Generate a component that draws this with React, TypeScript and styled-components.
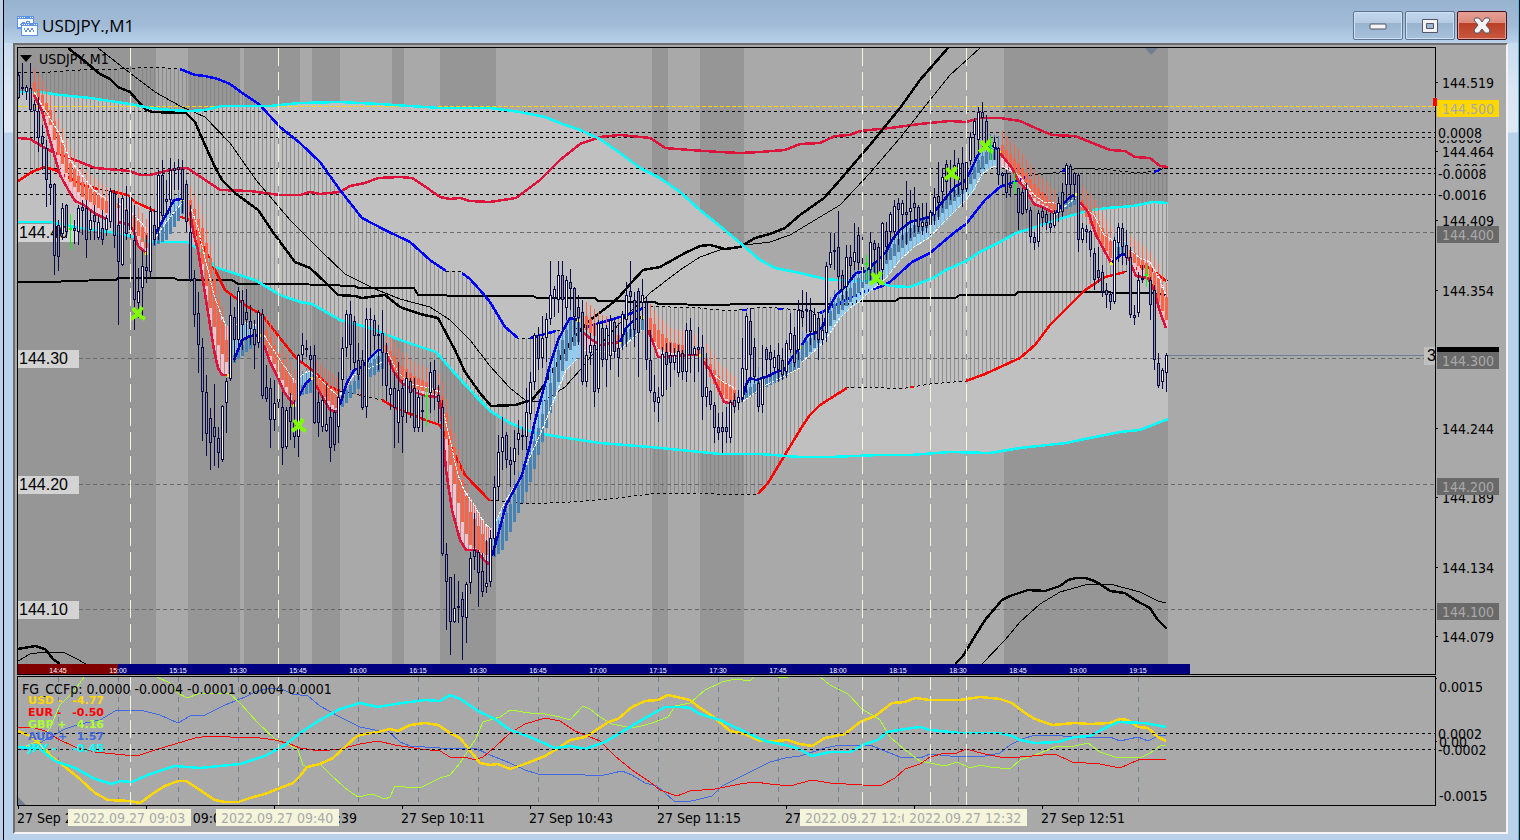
import React from "react";
import styled, { createGlobalStyle } from "styled-components";

const GlobalStyle = createGlobalStyle`
  *, *::before, *::after { box-sizing: border-box; }
  html, body { margin: 0; }
  body { background: #b9d1ea; font-family: "Open Sans", "Noto Sans", sans-serif; }
`;

const UI_FONT = '"DejaVu Sans Condensed", "Noto Sans", sans-serif';
const LABEL_FONT = '"Liberation Sans", Arial, sans-serif';

/* ---------- window chrome ---------- */

const WindowFrame = styled.main`
  display: flex;
  flex-direction: column;
  min-height: 100vh;
  padding: 0 11px 6px 9px;
  background: linear-gradient(#b9d1ea, #d8e5f3 85px, #dfe9f5 132px, #b9d1ea 133px);
  border-left: 1px solid #000;
  border-right: 1px solid #000;
  box-shadow: inset -1px 0 0 #32c8ee;
  margin-left: 3px;
`;

const TitleBar = styled.header`
  display: flex;
  align-items: center;
  gap: 4px;
  height: 43px;
  margin: 0 -10px 0 -9px;
  padding: 8px 11px 0 12px;
  background: linear-gradient(#98b3d0, #a2bcd8 60%, #b9d1ea);
`;

const Title = styled.h1`
  flex: 1;
  margin: 0;
  padding-top: 1px;
  font-size: 17px;
  line-height: 24px;
  font-weight: 400;
  color: #000;
`;

const Controls = styled.div`
  display: flex;
  gap: 2px;
`;

const ControlButton = styled.button<{ $danger?: boolean }>`
  display: grid;
  place-items: center;
  width: 50px;
  height: 29px;
  padding: 0;
  border: 1px solid ${(p) => (p.$danger ? "#43141c" : "#5d7591")};
  border-radius: 2px;
  background: ${(p) =>
    p.$danger
      ? "linear-gradient(#e6a093, #db8a7c 40%, #b93f26 41%, #c9583f)"
      : "linear-gradient(#c3d7ec, #b5cbe3 40%, #98b3cf 41%, #a8c1dc)"};
  box-shadow: inset 0 0 0 1px ${(p) => (p.$danger ? "#e3a096" : "#d2e1f1")};
`;

const Client = styled.section`
  flex: 1;
  display: grid;
  grid-template-columns: minmax(0, 1fr) 70px;
  grid-template-rows: minmax(628px, 1fr) 130px 26px;
  padding: 2px 0 0 2px;
  background: #a9a9a9;
  border: 2px solid #6d6d6d;
  border-right-color: #f4f4f4;
  border-bottom-color: #f4f4f4;
`;

const Panel = styled.div<{ $last?: boolean }>`
  min-width: 0;
  border: 1px solid #000;
  margin-bottom: ${(p) => (p.$last ? 0 : "1px")};
  overflow: hidden;
`;

const Scale = styled.div`
  min-width: 0;
`;

const TimeScale = styled.div`
  grid-column: 1 / -1;
  overflow: hidden;
`;

const Canvas = styled.svg<{ $open?: boolean }>`
  display: block;
  width: 100%;
  height: 100%;
  overflow: ${(p) => (p.$open ? "visible" : "hidden")};
  font-family: ${UI_FONT};
  font-size: 14px;
`;

const LevelText = styled.text`
  font-family: ${LABEL_FONT};
  font-size: 16px;
`;

const RulerText = styled.text`
  font-family: ${LABEL_FONT};
  font-size: 7px;
  fill: #fff;
  text-anchor: middle;
`;

const LegendText = styled.text`
  font-family: "DejaVu Sans", sans-serif;
  font-size: 11px;
  font-weight: 700;
`;

/* ---------- helpers ---------- */

type Pt = [number, number];

// Horizontal rules run past any window width; the panel clips them.
const FAR = 4000;

const parse = (s: string): Pt[] =>
  s
    .trim()
    .split(/\s+/)
    .map((p) => p.split(":").map(Number) as Pt);

const at = (pts: Pt[], x: number): number => {
  if (x <= pts[0][0]) return pts[0][1];
  for (let i = 1; i < pts.length; i++) {
    const [x1, y1] = pts[i];
    const [x0, y0] = pts[i - 1];
    if (x <= x1) return y0 + ((y1 - y0) * (x - x0)) / (x1 - x0);
  }
  return pts[pts.length - 1][1];
};

const join = (pts: Pt[]) => pts.map(([x, y]) => `${x},${y}`).join(" ");

interface CurveProps {
  d: string;
  c: string;
  w?: number;
  dash?: string;
}

const Curve = ({ d, c, w = 2.5, dash }: CurveProps) => (
  <polyline
    points={join(parse(d))}
    fill="none"
    stroke={c}
    strokeWidth={w}
    strokeDasharray={dash}
    strokeLinejoin="round"
    shapeRendering="crispEdges"
  />
);

/* ---------- price data ---------- */

const BANDS = [
  [18, 156], [188, 240], [244, 300], [312, 340], [392, 404],
  [440, 496], [652, 668], [700, 744], [1004, 1168],
];

const CLOUD_TOP =
  "18:92 40:92 60:95 90:98 130:104 150:108 170:110 190:111 205:110 222:106 270:106 300:103 340:102 380:104 440:108 490:108 520:112 545:117 560:123 580:130 600:139 620:153 640:168 660:178 680:192 700:210 720:226 745:247 760:260 775:268 800:273 825:279 850:281 875:281 890:286 910:287 920:283 933:278 946:270 966:261 980:252 1000:242 1016:233 1033:228 1046:223 1066:217 1087:211 1107:208 1133:206 1153:202 1168:203";
const CLOUD_BOTTOM =
  "18:222 50:222 80:228 110:232 130:236 150:242 187:242 200:250 215:267 230:272 255:280 280:295 300:302 312:304 340:320 370:328 400:340 436:352 450:368 470:390 490:411 510:423 532:432 560:437 600:443 650:447 720:454 760:454 800:457 830:457 880:455 910:455 950:452 990:453 1020:448 1066:443 1090:438 1120:432 1140:430 1168:419";

const BLUE_A =
  "180:69 195:75 205:76 218:79 230:84 245:95 260:105 280:127 300:143 320:162 340:190 362:218 385:230 410:242 430:260 446:271";
const BLUE_B = "462:273 470:279 480:290 490:302 505:327 518:338";
const BLUE_C = "530:338 545:334 556:331";
const BLUE_D = "586:327 610:320 630:314 643:308";
const BLUE_E =
  "820:313 836:305 850:298 866:291 880:287 890:282 912:262 930:253 955:232 966:224 985:200 1000:187 1014:182 1026:177";
const TOP_BAND =
  "18:72 50:72 80:70 120:69 150:67 180:69 195:75 218:79 230:84 245:95 260:105 280:127 300:143 320:162 340:190 362:218 385:230 410:242 430:260 446:271 462:272 470:279 480:290 490:302 505:327 518:338 530:338 556:331 586:327 610:320 643:308 650:306 670:307 700:308 730:311 765:307 800:310 820:313 836:305 850:298 866:291 880:287 890:282 912:262 930:253 955:232 966:224 985:200 1000:187 1014:182 1026:176 1060:172 1080:168 1110:170 1140:173 1168:168";

const RED_A = "18:181 32:172 44:167 55:170 80:184 98:189";
const RED_B = "110:191 128:195 135:202 155:211";
const RED_C =
  "178:216 190:220 205:250 225:290 245:305 262:315 280:338 296:358 312:370 330:387 340:391";
const RED_D = "382:400 396:408 425:420 440:425 450:445 465:475 490:501";
const RED_E = "758:494 768:483 780:463 800:430 810:415 820:405 847:388";
const RED_F =
  "966:381 985:374 1020:358 1035:345 1050:325 1068:307 1085:290 1105:277 1125:272";
const RED_G = "1133:270 1142:266 1150:268 1166:281";
const BOTTOM_BAND =
  "18:181 32:172 44:167 55:170 80:184 98:189 128:195 135:202 155:211 178:216 190:220 205:250 225:290 245:305 262:315 280:338 296:358 312:370 330:387 340:391 382:400 396:408 425:420 440:425 450:445 465:475 490:500 500:501 530:504 570:502 610:499 650:494 700:493 730:495 758:494 768:483 780:463 800:430 810:415 820:405 847:388 870:387 900:389 930:384 966:381 985:374 1020:358 1035:345 1050:325 1068:307 1085:290 1105:277 1133:270 1142:266 1150:268 1168:281";

const CRIMSON =
  "18:138 30:139 45:148 55:153 70:158 95:168 130:171 140:175 150:175 170:170 187:168 220:190 250:191 280:195 300:195 310:192 320:194 340:192 350:186 365:183 378:178 400:177 412:178 430:190 440:197 450:199 460:198 470:201 490:202 516:198 540:180 560:160 580:144 600:137 620:135 650:138 665:148 690:150 720:152 740:153 760:152 785:150 800:144 820:143 835:136 850:135 860:131 890:128 920:124 950:121 966:122 980:118 1000:118 1020:121 1040:130 1052:135 1075:136 1090:142 1110:150 1125:151 1135:157 1150:158 1160:166 1168:167";

const BLACK_THICK =
  "68:48 82:59 100:74 110:79 118:87 130:92 145:109 152:112 186:113 195:122 205:145 215:167 222:180 235:193 258:210 275:235 295:262 310:268 325:282 338:295 355:296 362:298 385:295 400:307 420:314 438:318 455:350 465:372 480:393 491:406 515:405 532:400 545:384 560:358 575:336 590:320 610:305 620:296 632:282 643:270 660:267 685:253 700:246 710:245 725:249 740:247 755:238 770:234 785:228 800:215 824:198 840:180 870:145 900:108 920:80 948:48";
const BLACK_THIN =
  "98:48 130:73 155:92 180:106 205:117 230:143 256:180 290:220 320:250 345:274 375:289 400:299 430:307 450:320 470:340 490:366 510:388 525:400 533:402 545:400 565:387 580:370 600:345 630:312 650:293 680:270 700:257 720:250 745:245 770:242 790:235 815:220 840:205 870:173 900:138 930:100 950:75 980:48";
const LONG_MA =
  "18:282 60:282 62:281 116:280 118:278 174:278 178:280 232:280 238:284 294:284 355:286 358:288 414:288 418:295 475:296 533:296 537:298 595:298 598:301 655:302 658:304 716:305 745:304 800:304 853:304 857:301 895:301 900:298 955:298 960:295 1015:295 1018:292 1070:292 1152:293 1166:295";

interface Ribbon {
  up: boolean;
  from: number;
  to: number;
  fast: string;
  slow: string;
  top: string;
  bottom: string;
}

const ribbons: Ribbon[] = (
  [
    [0, 34, 106, "34:95 42:111 50:140 60:175 70:193 75:201 84:205 94:213 106:219", "34:92 50:118 60:135 70:160 80:173 94:190 106:199", "34:82 42:95 50:110 58:132 70:163 82:182 94:192 106:201", "34:95 42:106 50:125 58:155 70:182 82:197 94:205 106:213"],
    [0, 118, 146, "118:222 130:225 134:232 138:246 146:253", "118:203 134:215 146:228", "118:203 134:215 146:233", "118:208 134:230 146:248"],
    [1, 154, 182, "154:236 158:229 166:215 174:200 182:199", "154:240 166:222 182:203", "154:230 166:222 182:200", "154:246 166:240 182:214"],
    [0, 190, 226, "190:212 194:235 198:250 202:275 210:325 214:350 218:368 222:375 228:375", "190:205 198:228 206:262 214:295 222:317 226:326", "190:200 202:228 210:258 218:300 226:340", "190:225 202:264 210:308 218:345 226:362"],
    [1, 234, 260, "234:360 238:350 242:340 250:336 260:335", "234:326 242:322 260:326", "234:355 246:340 260:330", "234:363 246:352 260:342"],
    [0, 266, 294, "264:345 270:362 278:378 284:392 294:405", "264:335 280:360 294:380", "266:330 278:352 294:383", "266:348 278:372 294:402"],
    [1, 298, 312, "298:398 306:383 312:378", "298:378 308:371 314:374", "298:388 312:378", "298:396 312:392"],
    [0, 316, 338, "316:385 324:400 330:410 338:412", "316:375 326:385 338:396", "316:375 338:393", "316:390 338:410"],
    [1, 342, 382, "340:405 346:385 354:370 362:367 370:358 378:350 382:350", "340:395 354:375 370:368 382:362", "342:395 366:366 382:352", "342:407 366:380 382:369"],
    [0, 386, 438, "386:353 394:372 402:383 414:392 426:396 438:397", "386:350 398:372 410:384 430:388 440:392", "386:345 398:362 414:376 438:387", "386:358 398:378 414:389 438:395"],
    [0, 442, 490, "440:400 446:470 452:510 460:540 466:550 476:550 484:560 490:565", "442:405 450:440 458:475 464:490 474:505 484:523 490:528", "442:396 450:430 462:480 470:512 490:548", "442:412 450:465 462:522 470:545 490:558"],
    [1, 494, 578, "492:556 498:535 506:505 514:490 522:475 530:445 534:425 542:395 550:365 558:340 566:325 570:318 578:320", "494:525 506:500 520:478 540:435 556:395 566:370 578:358", "494:545 502:522 518:485 530:455 546:400 558:350 570:320 578:318", "494:557 502:550 518:513 530:482 546:428 558:382 570:350 578:342"],
    [0, 586, 618, "584:333 592:340 600:345 620:342", "584:350 620:353", "586:316 600:328 618:335", "586:330 600:341 618:341"],
    [1, 622, 642, "620:342 626:328 634:320 642:317", "620:350 635:336 642:330", "622:336 642:318", "622:347 642:330"],
    [0, 650, 700, "648:330 654:345 658:357 662:357 690:355 700:355", "648:332 660:352 700:356", "650:318 658:330 670:342 700:349", "650:335 658:349 670:353 700:354"],
    [0, 706, 734, "702:360 710:370 718:388 724:402 734:404", "706:368 720:380 736:389", "706:358 718:376 734:390", "706:369 718:392 734:405"],
    [1, 742, 798, "742:400 746:385 750:378 756:380 766:377 776:372 784:370 794:355 800:347", "742:402 766:385 786:375 800:368", "742:393 760:380 780:370 798:352", "742:402 760:390 780:380 798:368"],
    [1, 802, 998, "802:345 808:335 816:333 824:325 828:310 836:295 846:286 856:273 866:271 878:260 886:252 892:240 900:230 910:222 918:220 930:217 940:205 948:195 956:186 964:182 970:172 978:155 984:147 994:146 1000:152", "802:362 820:346 830:333 840:318 850:308 860:301 870:291 886:278 900:260 914:247 930:237 942:224 954:212 966:200 974:189 982:174 994:166 1000:167", "802:345 818:330 838:298 850:288 862:273 878:260 890:248 902:235 914:225 930:213 942:201 954:190 966:180 978:160 990:148 998:150", "802:361 818:343 838:314 850:302 862:288 878:273 890:260 902:248 914:237 930:225 942:213 954:201 966:190 978:173 990:160 998:160"],
    [0, 1002, 1054, "1000:153 1012:168 1018:180 1026:190 1034:204 1042:207 1054:213", "1002:166 1020:176 1034:195 1044:202 1054:203", "1002:145 1010:154 1022:168 1034:184 1054:204", "1002:158 1010:166 1022:180 1034:198 1054:212"],
    [1, 1058, 1076, "1056:213 1062:205 1070:197 1076:194", "1056:215 1070:202 1076:198", "1058:206 1076:193", "1058:213 1076:204"],
    [0, 1082, 1110, "1080:202 1088:212 1096:235 1104:250 1111:263", "1080:205 1094:215 1104:235 1114:241", "1082:200 1094:214 1110:241", "1082:210 1094:231 1110:258"],
    [1, 1114, 1126, "1112:262 1122:254 1126:255", "1114:241 1126:242", "1114:248 1126:246", "1114:256 1126:255"],
    [0, 1130, 1166, "1128:257 1136:276 1148:278 1154:290 1160:312 1166:328", "1130:250 1140:258 1150:262 1160:280 1166:295", "1130:250 1140:258 1150:267 1158:278 1166:297", "1130:260 1140:268 1150:280 1158:302 1166:320"],
  ] as [number, number, number, string, string, string, string][]
).map(([up, from, to, fast, slow, top, bottom]) => ({ up: !!up, from, to, fast, slow, top, bottom }));

// One candle per minute: high, body top, body bottom, low; "u" marks a rising candle, "g" a signal wick.
const CANDLES = `
72,75,98,99 63,87,89,95 85,87,92,100u 63,88,110,112 100,104,111,140 97,111,138,152 125,136,144,170 140,148,180,207 170,184,188,205 183,184,256,275
220,225,257,271 203,208,234,240u 204,205,232,238 214,228,230,250g 220,228,231,244 205,208,232,245u 200,207,211,235 200,208,240,258 210,220,230,240u 205,215,222,240
215,222,238,240u 210,228,240,245 215,218,230,236u 188,191,222,228u 190,193,236,248 198,225,262,325 195,198,265,266u 186,210,234,240 192,197,230,238u 205,240,300,330
268,291,303,318u 250,266,288,320u 235,267,271,283 206,211,272,278u 210,225,240,245 170,175,228,240u 160,175,216,222 180,199,202,215 158,170,200,213u 162,168,171,190
159,167,170,190 160,169,200,213 180,184,222,232 205,232,280,282 270,278,315,327 292,313,345,373 338,347,392,441 375,392,434,456 408,418,443,470 384,427,437,466
427,438,453,468 405,406,460,462u 378,381,403,433u 296,315,379,381u 307,317,340,362 287,291,340,345u 290,300,325,350 289,312,320,340 305,321,329,345 320,329,345,369
310,312,343,348u 309,314,396,399 365,387,399,402 378,388,420,448 380,403,420,431u 388,399,402,420 392,407,448,465 407,410,447,449u 393,407,422,440 400,422,437,448
354,355,437,457u 333,345,355,362u 340,348,350,357 346,355,360,377 345,355,423,424 392,402,423,437 395,400,427,432u 384,424,431,432u 407,417,448,462 410,412,445,451
372,397,427,443u 337,348,380,400u 310,314,348,357u 301,314,345,370 316,321,363,370 343,360,375,380 350,360,408,410 308,319,407,418u 308,319,320,357 315,320,336,350
325,334,336,370 310,333,353,386 343,353,386,401 360,388,395,410u 372,388,408,448 362,390,423,443u 380,388,417,453 372,378,413,423u 378,381,393,418 378,388,428,432
390,397,428,432u 395,410,412,432 388,395,397,426g 362,372,393,413u 360,370,390,410 385,395,402,423 400,407,554,556 543,554,582,630 577,577,622,655 574,608,622,623u
581,606,608,623 592,599,617,660 582,584,618,643u 552,558,583,594u 513,550,557,570 550,552,573,607 553,571,592,597 540,583,587,593u 530,538,582,587u 476,487,539,556u
435,452,487,500u 417,437,452,470u 432,435,460,468 447,460,465,487 430,448,462,475u 420,433,440,455u 427,435,437,450 388,412,437,450u 372,382,414,420u 333,335,382,390u
327,335,359,370 316,338,358,368u 313,319,338,362u 261,295,319,325u 286,289,298,317u 261,275,300,313u 261,275,300,330 276,280,308,320u 269,282,289,310 287,288,317,335
295,307,318,345 300,312,382,385 325,355,382,387u 333,345,353,365u 323,345,392,407 320,323,389,393u 320,328,360,367 325,328,360,387u 315,320,356,370u 317,322,352,358
323,348,358,377 311,314,335,350u 282,295,320,347u 261,291,297,337 292,300,330,347 288,291,333,377 279,295,303,320u 297,302,360,370 330,360,391,393 375,392,402,412
387,397,403,422u 347,354,396,397u 343,352,365,390 343,355,363,387 348,355,363,370u 345,351,373,377u 350,353,372,380 323,330,372,382u 318,330,355,373 346,348,355,382u
327,347,350,372 335,347,397,420 353,387,397,407u 390,391,405,410 402,405,428,443 413,427,433,440 412,427,432,453 407,427,432,443 400,402,438,443u 393,400,407,413
390,397,403,410u 338,368,398,402u 313,316,370,393u 308,321,355,383 338,347,377,383 378,383,407,412 345,378,405,413u 347,349,360,377 345,352,360,377 350,357,368,373u
343,355,370,382 348,360,375,380 340,343,372,378u 313,333,350,353u 327,335,363,367 300,310,350,360u 290,311,318,327 292,309,311,333 298,310,332,345 308,314,332,340u
313,318,340,360 315,330,340,345u 262,266,333,342u 233,252,265,268u 233,250,252,270 211,247,277,290 270,275,290,300 245,257,287,300u 245,257,266,280 223,252,262,270u
227,235,263,270 237,267,270,280 255,263,265,280g 232,242,270,280u 240,243,250,277 243,247,283,285 222,223,270,280u 222,231,247,260 212,214,232,245u 200,206,232,240u
198,203,210,245 200,203,215,240u 181,212,215,245 190,208,212,238u 187,203,208,233 205,207,227,232 203,222,227,235u 203,222,226,233 210,212,225,235u 188,197,215,225u
162,196,203,220 168,177,192,208u 160,164,182,200 160,170,176,200u 150,165,178,197 158,163,180,195u 147,163,190,207 148,162,189,195u 132,137,161,165u 118,121,135,158u
107,112,140,152u 102,112,118,150 115,121,145,148 136,145,147,160g 137,142,148,160u 147,148,175,185 172,173,176,187 170,173,193,198 175,185,188,197 173,182,184,194g
188,188,213,230 188,192,214,215 183,189,210,213u 207,210,237,243 232,237,243,250 210,213,242,247u 207,211,218,227 210,214,223,230 213,223,228,233 210,213,226,228u
197,203,213,222u 183,192,212,217 163,165,185,203u 164,166,185,200 172,173,185,200 173,175,240,252 223,228,240,243u 225,229,232,243 230,231,250,257 248,253,280,290
247,270,278,283 265,272,292,297 283,290,295,308 292,294,302,310 237,240,302,304u 223,227,243,262u 223,228,247,265 230,245,258,265 247,257,315,318 305,315,318,325
272,280,313,317u 265,278,280,283 265,274,276,287g 277,280,305,320 285,290,360,370 353,363,386,388 368,370,382,389u 353,355,373,392u
`
  .trim()
  .split(/\s+/)
  .map((c, i) => {
    const [high, top, bottom, low] = c.replace(/[ug]/, "").split(",").map(Number);
    return { x: 18 + i * 4, high, top, bottom, low, up: c.endsWith("u"), signal: c.endsWith("g") };
  });

const BUY_SELL = [
  [138, 314], [299, 426], [877, 279], [952, 174], [986, 147],
];

const LEVELS = [
  { price: "144.40", y: 232 },
  { price: "144.30", y: 358 },
  { price: "144.20", y: 484 },
  { price: "144.10", y: 609 },
];

const SESSION_LINES = [130, 278, 862, 930, 966];
const HOURS = [
  "14:45", "15:00", "15:15", "15:30", "15:45", "16:00", "16:15", "16:30", "16:45", "17:00",
  "17:15", "17:30", "17:45", "18:00", "18:15", "18:30", "18:45", "19:00", "19:15",
];

const SessionLines = ({ from, to, offset = 0 }: { from: number; to: number; offset?: number }) => (
  <g stroke="#f5f5dc" strokeDasharray="18 6" strokeDashoffset={offset} shapeRendering="crispEdges">
    {SESSION_LINES.map((x) => (
      <line key={x} x1={x + 0.5} x2={x + 0.5} y1={from} y2={to} />
    ))}
  </g>
);

const RibbonShape = ({ r }: { r: Ribbon }) => {
  const fast = parse(r.fast);
  const slow = parse(r.slow);
  const top = parse(r.top);
  const bottom = parse(r.bottom);
  const xs: number[] = [];
  for (let x = r.from; x <= r.to; x += 4) xs.push(x);
  const fill = r.up ? "#87cefa" : "#ffc0cb";
  const body = r.up ? "#4682b4" : "#ff6347";
  const [endX, endY] = fast[fast.length - 1];
  return (
    <g shapeRendering="crispEdges">
      {xs.map((x) => {
        const a = at(fast, x);
        const b = at(slow, x);
        return <rect key={x} x={x - 1} width="3" y={Math.round(Math.min(a, b))} height={Math.round(Math.abs(a - b))} fill={fill} />;
      })}
      {xs.map((x) => {
        const t = Math.round(at(top, x));
        const b = Math.round(at(bottom, x));
        return (
          <g key={x} fill={body}>
            <rect x={x - 1} width="3" y={t} height={b - t} />
            <rect x={x} width="1" y={t - 14} height="14" />
          </g>
        );
      })}
      <polyline points={join(slow)} fill="none" stroke="#fff" strokeDasharray="3 1" />
      <polyline points={join(fast)} fill="none" stroke={r.up ? "#0000cd" : "#dc143c"} strokeWidth="2.5" />
      {endX < 1166 && <rect x={endX - 1} y={endY - 1} width="3" height="3" fill="#ff0" />}
    </g>
  );
};

const PriceChart = () => {
  const top = parse(CLOUD_TOP);
  const bottom = parse(CLOUD_BOTTOM);
  const bandTop = parse(TOP_BAND);
  const bandBottom = parse(BOTTOM_BAND);
  return (
    <Canvas role="img" aria-label="USDJPY one minute price chart">
      <g transform="translate(-18 -48)">
        {BANDS.map(([a, b]) => (
          <rect key={a} x={a} y="48" width={b - a} height="616" fill="#969696" />
        ))}
        <polygon points={join([...top, ...[...bottom].reverse()])} fill="#c0c0c0" shapeRendering="crispEdges" />
        <g fill="#828282" fillOpacity="0.8" shapeRendering="crispEdges">
          {CANDLES.filter((c) => c.x >= 30).map((c) => {
            const a = Math.round(at(bandTop, c.x));
            const b = Math.round(at(bandBottom, c.x));
            return <rect key={c.x} x={c.x} width="1" y={Math.min(a, b)} height={Math.abs(b - a)} />;
          })}
        </g>
        {LEVELS.map((l) => (
          <g key={l.price}>
            <rect x="18" y={l.y - 8} width="61" height="18" fill="#d3d3d3" />
            <line x1="79" x2={FAR} y1={l.y + 0.5} y2={l.y + 0.5} stroke="#696969" strokeDasharray="4 3" shapeRendering="crispEdges" />
            <LevelText x="19" y={l.y + 6}>{l.price}</LevelText>
          </g>
        ))}
        <g shapeRendering="crispEdges">
          <line x1="18" x2={FAR} y1="106.5" y2="106.5" stroke="#ffd700" strokeDasharray="4 2" />
          {[111, 132, 137, 168, 173, 194].map((y) => (
            <line key={y} x1="18" x2={FAR} y1={y + 0.5} y2={y + 0.5} stroke="#000" strokeDasharray="3 3" />
          ))}
          <line x1="1168" x2={FAR} y1="355.5" y2="355.5" stroke="#708090" />
        </g>

        <Curve d={TOP_BAND} c="#000" w={1} dash="3 3" />
        <Curve d={BOTTOM_BAND} c="#000" w={1} dash="3 3" />
        <Curve d={CRIMSON} c="#dc143c" />
        <Curve d={LONG_MA} c="#000" w={2} />
        <Curve d={BLACK_THICK} c="#000" />
        <Curve d={BLACK_THIN} c="#000" w={1} />
        <Curve d="955:664 963:656 975:636 985:620 1002:600 1010:596 1028:590 1045:591 1060:586 1068:580 1076:578 1085:578 1092:580 1100:584 1110:591 1125:593 1135:600 1150:608 1158:620 1167:629" c="#000" />
        <Curve d="982:664 1005:640 1020:622 1040:604 1060:592 1085:585 1110:584 1140:592 1158:601 1166:603" c="#000" w={1} />
        <Curve d="18:649 35:646 45:649 53:659 60:664" c="#000" />
        <Curve d="18:661 30:654 45:652 65:653 75:658 86:664" c="#000" w={1} />
        {[BLUE_A, BLUE_B, BLUE_C, BLUE_D, BLUE_E, "742:310 747:310", "778:309 783:309", "1062:171 1066:170", "1154:172 1160:170"].map((d) => (
          <Curve key={d} d={d} c="#00f" />
        ))}
        {[RED_A, RED_B, RED_C, RED_D, RED_E, RED_F, RED_G, "360:395 363:396", "910:387 914:387"].map((d) => (
          <Curve key={d} d={d} c="#f00" />
        ))}
        <Curve d={CLOUD_TOP} c="#0ff" />
        <Curve d={CLOUD_BOTTOM} c="#0ff" />

        {ribbons.map((r) => (
          <RibbonShape key={r.from} r={r} />
        ))}

        <g shapeRendering="crispEdges">
          {CANDLES.map((c) =>
            c.signal ? null : (
              <g key={c.x}>
                <rect x={c.x} y={c.high} width="1" height={c.low - c.high} fill="#0a0a46" />
                <rect x={c.x - 1} y={c.top} width="3" height={c.bottom - c.top} fill="#0a0a46" />
                <rect x={c.x} y={c.top + 1} width="1" height={Math.max(0, c.bottom - c.top - 2)} fill={c.up ? "#fff" : "#969696"} />
              </g>
            ),
          )}
        </g>
        <g stroke="#7fff00" strokeWidth="4" fill="none">
          {BUY_SELL.map(([x, y]) => (
            <path key={x} d={`M${x - 7} ${y + 5}Q${x} ${y + 1} ${x + 4} ${y - 7}M${x - 5} ${y - 6}Q${x} ${y + 2} ${x + 7} ${y + 5}`} />
          ))}
        </g>
        <g fill="#0f0" shapeRendering="crispEdges">
          {CANDLES.filter((c) => c.signal).map((c) => (
            <g key={c.x}>
              <rect x={c.x} y={c.high} width="1" height={c.low - c.high} />
              <rect x={c.x - 1} y={c.top} width="3" height="2" />
            </g>
          ))}
          <rect x="426" y="388" width="1" height="38" />
        </g>
        <SessionLines from={48} to={664} />

        <g shapeRendering="crispEdges">
          <rect x="18" y="664" width="100" height="10" fill="#800000" />
          <rect x="118" y="664" width="1072" height="10" fill="#000080" />
        </g>
        {HOURS.map((h, i) => (
          <RulerText key={h} x={58 + i * 60} y="673">{h}</RulerText>
        ))}
        <path d="M20 55h12l-6 7z" fill="#000" />
        <path d="M1145 48h13l-7 7z" fill="#708090" />
        <text x="39" y="64">USDJPY.,M1</text>
      </g>
    </Canvas>
  );
};

const STRENGTH = [
  { c: "#4169e1", w: 1, d: "18:750 30:749 45:740 65:729 80:724 100:720 115:711 140:710 160:715 178:723 190:716 205:715 225:705 245:697 255:692 270:688 280:688 292:694 308:696 320:706 340:717 360:727 375:730 387:730 400:742 410:746 440:748 475:748 490:755 510:763 525:770 538:774 570:774 600:776 622:771 632:775 645:783 657:786 665:793 674:801 687:802 700:799 712:796 722:786 740:777 770:762 785:758 800:756 825:748 840:745 870:745 885:751 900:757 920:758 930:754 960:757 985:756 1000:753 1010:745 1022:739 1035:735 1055:735 1080:738 1110:737 1120:741 1138:737 1148:741 1160:735 1166:735" },
  { c: "#adff2f", w: 1, d: "22:748 40:740 50:728 60:705 75:690 84:677" },
  { c: "#adff2f", w: 1, d: "157:677 170:683 178:693 187:698 198:694 215:693 230:694 240:703 258:723 275:739 290:745 298:750 303:765 308:768 320:764 330:774 345:788 358:797 372:794 385:799 390:797 395:786 405:787 422:787 440:778 450:775 460:763 475:740 483:722 500:717 510:710 530:713 545:714 560:717 570:720 583:706 590:709 600:717 612:724 632:728 645:725 655:722 668:717 675:706 690:703 705:690 722:682 735:679 750:681 755:676" },
  { c: "#adff2f", w: 1, d: "778:677 783:678 788:677" },
  { c: "#adff2f", w: 1, d: "820:677 830:685 848:694 862:709 880:720 890:737 905:750 920:761 930:763 945:766 957:762 970:768 980:765 990:767 1010:769 1020:760 1035:755 1055:747 1075:746 1088:743 1100:752 1115:757 1140:758 1150:753 1160:746 1166:745" },
  { c: "#f00", w: 1, d: "18:727 35:728 45:731 58:739 75:747 95:752 125:755 140:755 155:750 175:744 195:738 210:736 230:737 260:738 275:740 290:744 300:748 320:751 340:749 360:744 378:741 395:745 420:749 440:751 450:757 465:757 475:760 483:757 495:747 510:733 525:724 545:718 560:721 575:731 600:741 615:756 632:770 650:782 660:790 677:796 690:791 715:789 740:784 755:782 770:784 790:786 812:780 830:783 862:785 882:785 895:778 905:769 920:764 930:757 945:753 957:753 966:749 985:754 1000:757 1020:757 1055:754 1072:762 1100:764 1120:768 1138:760 1166:759" },
  { c: "#ffd700", w: 2.5, d: "18:731 30:736 40:744 52:757 65:767 80:779 95:793 108:800 130:801 140:803 155:792 165:786 178:781 186:781 200:790 215:800 225:802 238:802 250:798 265:794 280:788 293:783 300:776 307:767 320:764 333:758 345:747 357:736 365:734 378:732 390:729 398:731 410:725 425:723 438:725 450:733 460:738 468:748 480:763 490:765 498:764 510:769 525:764 545:756 560:747 570:740 585:737 595:731 608:722 618:719 632:707 645:701 658:700 668:695 690:700 700:708 715:718 730:731 745:734 760:741 775:741 787:740 800:744 812:746 825:738 845:734 860:722 875:716 892:703 905:702 915:698 930:700 960:700 980:697 1000:699 1012:703 1025:713 1035:719 1052:725 1075:723 1090:724 1110:723 1120:719 1128:720 1138:727 1148:728 1158:737 1166:741" },
  { c: "#0ff", w: 2.5, d: "18:747 40:749 55:761 75:768 95:779 112:784 120:781 132:782 150:774 175:766 200:768 240:764 265:756 285:745 300:733 320:720 340:709 360:703 378:707 395:704 425:700 440:701 450:695 460:699 480:712 495:719 510:730 530:737 555:748 570:746 585:749 605:742 620:733 640:721 665:707 680:707 690:708 700:714 720:720 745:732 765:741 785:745 797:748 812:756 830:752 850:752 865:744 878:740 887:732 905:729 920:727 930:730 960:733 985:733 1000:733 1012:736 1020:740 1035:743 1058:742 1075:737 1090:736 1105:728 1118:722 1145:723 1166:727" },
];

const LEGEND = [
  { name: "USD -", value: "-4.77", c: "#ffd700" },
  { name: "EUR -", value: "-0.50", c: "#f00" },
  { name: "GBP +", value: "4.16", c: "#adff2f" },
  { name: "AUD +", value: "1.57", c: "#4169e1" },
  { name: "JPY -", value: "-0.45", c: "#0ff" },
];

const StrengthChart = () => (
  <Canvas role="img" aria-label="Currency strength indicator">
    <g transform="translate(-18 -677)">
      <g stroke="#708090" strokeDasharray="5 5" shapeRendering="crispEdges">
        {HOURS.map((h, i) => (
          <line key={h} x1={58.5 + i * 60} x2={58.5 + i * 60} y1="677" y2="805" />
        ))}
      </g>
      {STRENGTH.map((s) => (
        <Curve key={s.d} d={s.d} c={s.c} w={s.w} />
      ))}
      <g stroke="#000" strokeDasharray="3 3" shapeRendering="crispEdges">
        <line x1="18" x2={FAR} y1="733.5" y2="733.5" />
        <line x1="18" x2={FAR} y1="749.5" y2="749.5" />
      </g>
      <SessionLines from={677} to={805} offset={5} />
      <path d="M18 797l8 8h-8z" fill="#708090" />
      <text x="22" y="694">FG_CCFp: 0.0000 -0.0004 -0.0001 0.0004 0.0001</text>
      {LEGEND.map((l, i) => (
        <g key={l.name} fill={l.c}>
          <LegendText x="28" y={704 + i * 12}>{l.name}</LegendText>
          <LegendText x="104" y={704 + i * 12} textAnchor="end">{l.value}</LegendText>
        </g>
      ))}
    </g>
  </Canvas>
);

const TICKS: [string, number][] = [
  ["144.519", 88], ["144.464", 157], ["144.409", 226], ["144.354", 296],
  ["144.244", 434], ["144.189", 503], ["144.134", 573], ["144.079", 642],
];

const TAGS = [
  { t: "144.500", y: 114, c: "#ffd700" },
  { t: "144.400", y: 240, c: "#696969" },
  { t: "144.300", y: 366, c: "#696969" },
  { t: "144.200", y: 492, c: "#696969" },
  { t: "144.100", y: 617, c: "#696969" },
];

const PriceScale = () => (
  <Canvas $open role="img" aria-label="Price scale">
    <g transform="translate(-1436 -47)">
      <text x="1438" y="143">0.0006</text>
      <text x="1438" y="174">-0.0006</text>
      <rect x="1437" y="126" width="60" height="14" fill="#a9a9a9" />
      <rect x="1437" y="166" width="60" height="15" fill="#a9a9a9" />
      <text x="1438" y="138">0.0008</text>
      <text x="1438" y="179">-0.0008</text>
      <text x="1438" y="200">-0.0016</text>
      <rect x="1440" y="145" width="60" height="14" fill="#a9a9a9" />
      {TICKS.map(([t, y]) => (
        <g key={t}>
          <rect x="1436" y={y - 6} width="2" height="1" />
          <text x="1442" y={y}>{t}</text>
        </g>
      ))}
      <rect x="1437" y="347" width="62" height="17" fill="#000" />
      {TAGS.map((g) => (
        <g key={g.t}>
          <rect x="1437" y={g.y - 14} width="62" height="17" fill={g.c} />
          <text x="1442" y={g.y} fill="#a9a9a9">{g.t}</text>
        </g>
      ))}
      <rect x="1433" y="98" width="4" height="8" fill="#f00" />
      <rect x="1424" y="347" width="11" height="18" fill="#c0c0c0" />
      <LevelText x="1427" y="361">3</LevelText>
    </g>
  </Canvas>
);

const StrengthScale = () => (
  <Canvas $open role="img" aria-label="Strength scale">
    <g transform="translate(-1436 -676)">
      <rect x="1436" y="678" width="1" height="1" />
      <rect x="1436" y="741" width="1" height="1" />
      <text x="1439" y="692">0.0015</text>
      <text x="1439" y="747">0.00</text>
      <text x="1438" y="739">0.0002</text>
      <text x="1438" y="755">-0.0002</text>
      <text x="1439" y="801">-0.0015</text>
    </g>
  </Canvas>
);

const DATES = [
  "2022", "09:07", "09:39", "10:11", "10:43", "11:15", "11:47", "12:19", "12:51",
];

const DATE_TAGS: [string, number][] = [
  ["2022.09.27 09:03", 68], ["2022.09.27 09:40", 216], ["2022.09.27 12:23", 868],
  ["2022.09.27 12:06", 800], ["2022.09.27 12:32", 904],
];

const TimeAxis = () => (
  <Canvas role="img" aria-label="Time scale">
    <g transform="translate(-17 -806)">
      {DATES.map((d, i) => (
        <g key={d}>
          <rect x={18 + i * 128} y="806" width="1" height="3" />
          <text x={17 + i * 128} y="823">27 Sep {d}</text>
        </g>
      ))}
      {DATE_TAGS.map(([t, x]) => (
        <g key={t}>
          <rect x={x} y="809" width="123" height="17" fill="#f5f5dc" />
          <text x={x + 5} y="823" fill="#a9a9a9">{t}</text>
        </g>
      ))}
    </g>
  </Canvas>
);

const ChartIcon = () => (
  <svg width="22" height="22" viewBox="0 0 22 22" aria-hidden="true" shapeRendering="crispEdges">
    <rect x="1" y="1" width="17" height="13" fill="#5b93e6" />
    <rect x="2" y="4" width="15" height="8" fill="#fff" />
    <path d="M2 2h1v1h-1zM4 2h1v1h-1zM6 2h1v1h-1zM8 2h1v1h-1zM14 2h1v1h-1zM16 2h1v1h-1z" fill="#fff" />
    <path d="M4 9h2v-2h2v1h2v-2h3v2h2" fill="none" stroke="#5b93e6" />
    <rect x="5" y="8" width="17" height="13" fill="#5b93e6" />
    <rect x="6" y="11" width="15" height="9" fill="#fff" />
    <path d="M6 9h1v1h-1zM8 9h1v1h-1zM10 9h1v1h-1zM12 9h1v1h-1zM18 9h1v1h-1zM20 9h1v1h-1z" fill="#fff" />
    <path d="M8 13l2 4 2-4 2 4 2-4 2 4" fill="none" stroke="#5b93e6" />
  </svg>
);

const App = () => (
  <>
    <GlobalStyle />
    <WindowFrame>
      <TitleBar>
        <ChartIcon />
        <Title>USDJPY.,M1</Title>
        <Controls>
          <ControlButton type="button" aria-label="Minimize">
            <svg width="18" height="8" aria-hidden="true">
              <rect x="1" y="2" width="16" height="5" rx="1" fill="#f4f4f4" stroke="#535666" />
            </svg>
          </ControlButton>
          <ControlButton type="button" aria-label="Maximize">
            <svg width="18" height="16" aria-hidden="true">
              <path d="M1.500 1.500h15v13h-15zM5.500 5.500v5h7v-5z" fill="#f4f4f4" fillRule="evenodd" stroke="#535666" />
            </svg>
          </ControlButton>
          <ControlButton type="button" $danger aria-label="Close">
            <svg width="18" height="17" aria-hidden="true">
              <path d="M2 1h4l3 4 3-4h4l1 2-4 5 4 5-1 3h-4l-3-4-3 4h-4l-1-3 4-5-4-5z" fill="#f4f4f4" stroke="#535666" />
            </svg>
          </ControlButton>
        </Controls>
      </TitleBar>
      <Client>
        <Panel>
          <PriceChart />
        </Panel>
        <Scale>
          <PriceScale />
        </Scale>
        <Panel $last>
          <StrengthChart />
        </Panel>
        <Scale>
          <StrengthScale />
        </Scale>
        <TimeScale>
          <TimeAxis />
        </TimeScale>
      </Client>
    </WindowFrame>
  </>
);

export default App;
